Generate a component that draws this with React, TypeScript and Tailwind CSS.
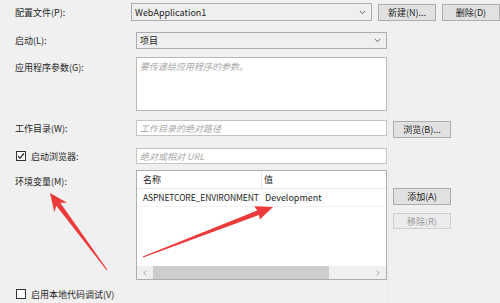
import React from "react";

const Chevron = () => (
  <svg width="7" height="5" viewBox="0 0 7 5" className="shrink-0">
    <path d="M0.8 1 L3.5 3.6 L6.2 1" fill="none" stroke="#606060" strokeWidth="1" />
  </svg>
);

const Select = ({ value, h }: { value: string; h: string }) => (
  <div className={`w-[251px] ${h} border border-[#acacac] bg-[#efefef] flex items-center pl-[3px] pr-[5px] justify-between`}>
    <span className="text-[#1e1e1e]">{value}</span>
    <Chevron />
  </div>
);

const Btn = ({ label, disabled }: { label: string; disabled?: boolean }) => (
  <div
    className={
      disabled
        ? "w-[58px] h-[16px] border border-[#cfcfcf] bg-[#ececec] text-[#9a9a9a] flex items-center justify-center shrink-0"
        : "w-[58px] h-[17px] border border-[#adadad] bg-[#e1e1e1] text-[#1e1e1e] flex items-center justify-center shrink-0"
    }
  >
    {label}
  </div>
);

const CheckBox = ({ checked }: { checked?: boolean }) => (
  <div className="w-[10px] h-[10px] border border-[#333] bg-white flex items-center justify-center shrink-0">
    {checked && (
      <svg width="8" height="8" viewBox="0 0 8 8">
        <path d="M1 4.2 L3 6.2 L7 1.5" fill="none" stroke="#222" strokeWidth="1.2" />
      </svg>
    )}
  </div>
);

export default function App() {
  return (
    <div className="relative w-[500px] h-[303px] overflow-hidden bg-[#f0f0f0] text-[9px] leading-none text-[#1e1e1e] [font-family:'Noto_Sans_CJK_SC',sans-serif]">
      <div className="flex flex-col pt-[3px]">
        {/* Row 1 */}
        <div className="flex items-start">
          <div className="w-[136px] pl-[15px] h-[18px] flex items-center">配置文件(P):</div>
          <Select value="WebApplication1" h="h-[18px]" />
          <div className="ml-[6px] mt-[1px] flex gap-[6px]">
            <Btn label="新建(N)..." />
            <Btn label="删除(D)" />
          </div>
        </div>
        {/* Row 2 */}
        <div className="flex items-start mt-[11px]">
          <div className="w-[136px] pl-[15px] h-[17px] flex items-center">启动(L):</div>
          <Select value="项目" h="h-[17px]" />
        </div>
        {/* Row 3 */}
        <div className="flex items-start mt-[8px]">
          <div className="w-[136px] pl-[15px] pt-[6px]">应用程序参数(G):</div>
          <div className="w-[251px] h-[54px] border border-[#b9b9b9] bg-white pl-[3px] pt-[4px] italic text-[#a8a8a8]">
            要传递给应用程序的参数。
          </div>
        </div>
        {/* Row 4 */}
        <div className="flex items-start mt-[9px]">
          <div className="w-[136px] pl-[15px] h-[16px] flex items-center">工作目录(W):</div>
          <div className="w-[251px] h-[16px] border border-[#c4c4c4] bg-white pl-[3px] flex items-center italic text-[#a8a8a8]">
            工作目录的绝对路径
          </div>
          <div className="ml-[6px] mt-[1px]">
            <Btn label="浏览(B)..." />
          </div>
        </div>
        {/* Row 5 */}
        <div className="flex items-start mt-[10px]">
          <div className="w-[136px] pl-[16px] h-[16px] flex items-center gap-[5px]">
            <CheckBox checked />
            <span>启动浏览器:</span>
          </div>
          <div className="w-[251px] h-[16px] border border-[#c4c4c4] bg-white pl-[3px] flex items-center italic text-[#a8a8a8]">
            绝对或相对 URL
          </div>
        </div>
        {/* Row 6 */}
        <div className="flex items-start mt-[6px]">
          <div className="w-[136px] pl-[15px] pt-[7px]">环境变量(M):</div>
          <div className="w-[251px] h-[110px] border border-[#a9aeb5] bg-white flex flex-col">
            <div className="flex h-[18px] border-b border-[#e5e5e5] shrink-0">
              <div className="w-[125px] pl-[6px] flex items-center border-r border-[#e5e5e5]">名称</div>
              <div className="flex-1 pl-[2px] flex items-center">值</div>
            </div>
            <div className="flex h-[18px] shrink-0 border-b border-[#f2f2f2]">
              <div className="w-[125px] pl-[6px] flex items-center whitespace-nowrap text-[8.6px] tracking-[-0.15px]">ASPNETCORE_ENVIRONMENT</div>
              <div className="flex-1 pl-[3px] flex items-center">Development</div>
            </div>
            <div className="flex-1" />
            <div className="h-[13px] bg-[#f0f0f0] flex items-center shrink-0">
              <div className="w-[16px] flex items-center justify-center text-[#a0a0a0]">
                <svg width="4" height="6" viewBox="0 0 4 6">
                  <path d="M3.5 0.5 L0.8 3 L3.5 5.5" fill="none" stroke="#a6a6a6" strokeWidth="0.9" />
                </svg>
              </div>
              <div className="w-[176px] h-[13px] bg-[#cdcdcd]" />
              <div className="flex-1" />
              <div className="w-[16px] flex items-center justify-center">
                <svg width="4" height="6" viewBox="0 0 4 6">
                  <path d="M0.5 0.5 L3.2 3 L0.5 5.5" fill="none" stroke="#a6a6a6" strokeWidth="0.9" />
                </svg>
              </div>
            </div>
          </div>
          <div className="ml-[6px] mt-[18px] flex flex-col gap-[8px]">
            <Btn label="添加(A)" />
            <Btn label="移除(R)" disabled />
          </div>
        </div>
        {/* Row 7 */}
        <div className="flex items-center mt-[9px] pl-[16px] gap-[5px]">
          <CheckBox />
          <span>启用本地代码调试(V)</span>
        </div>
      </div>

      {/* faint divider */}
      <div className="absolute left-[388px] top-[50px] w-px h-[253px] bg-[#e8e8e8]" />

      {/* red arrows */}
      <svg className="absolute left-0 top-0 pointer-events-none" width="500" height="303" viewBox="0 0 500 303">
        <polygon
          points="50,193 67.1,202.7 60.3,202.8 107.4,269.7 106.6,270.3 56.3,205.8 54.3,212.3"
          fill="#ec3a3a"
        />
        <polygon
          points="273,207 259.8,219.5 259,215 143.2,257.5 142.8,256.5 257.2,210.4 254.4,206.3"
          fill="#ec3a3a"
        />
      </svg>
    </div>
  );
}
